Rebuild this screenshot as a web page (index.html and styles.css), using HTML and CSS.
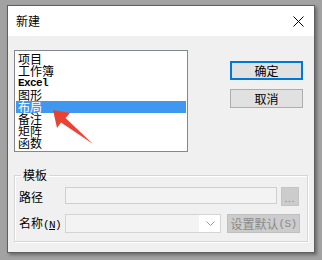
FILE: index.html
```html
<!DOCTYPE html>
<html lang="zh-CN">
<head>
<meta charset="utf-8">
<link rel="stylesheet" href="styles.css">
</head>
<body>
<div class="dialog">
  <div class="titlebar">
    <span class="title">新建</span>
    <svg class="close" width="11" height="11" viewBox="0 0 11 11"><path d="M0.5 0.5 L10.5 10.5 M10.5 0.5 L0.5 10.5" stroke="#000" stroke-width="1"/></svg>
  </div>
  <div class="content">
    <div class="top">
      <div class="listwrap">
        <div class="listbox">
          <div class="item">项目</div>
          <div class="item">工作簿</div>
          <div class="item mono">Excel</div>
          <div class="item">图形</div>
          <div class="item selected">布局</div>
          <div class="item">备注</div>
          <div class="item">矩阵</div>
          <div class="item">函数</div>
        </div>
        <svg class="arrow" width="46" height="40" viewBox="0 0 46 40">
          <defs>
            <linearGradient id="g" x1="0" y1="0" x2="1" y2="1">
              <stop offset="0" stop-color="#e8402f"/>
              <stop offset="1" stop-color="#f0453a"/>
            </linearGradient>
          </defs>
          <polygon points="3,2 20,5 15.5,10 43,36 11,14.5 7,20" fill="url(#g)"/>
        </svg>
      </div>
      <div class="buttons">
        <div class="btn default">确定</div>
        <div class="btn">取消</div>
      </div>
    </div>
    <fieldset class="group">
      <legend>模板</legend>
      <div class="row">
        <span class="label">路径</span>
        <div class="textbox"></div>
        <div class="dots">...</div>
      </div>
      <div class="row row2">
        <span class="label">名称<span class="mono">(<u>N</u>)</span></span>
        <div class="combo">
          <div class="combo-edit"></div>
          <svg class="chev" width="9" height="5" viewBox="0 0 9 5"><path d="M0.5 0.5 L4.5 4.5 L8.5 0.5" fill="none" stroke="#9a9a9a" stroke-width="1"/></svg>
        </div>
        <div class="btn disabled">设置默认<span class="mono">(S)</span></div>
      </div>
    </fieldset>
  </div>
</div>
</body>
</html>
```

FILE: styles.css
```css
* { box-sizing: border-box; }
html, body { margin: 0; }
body {
  background: #a2a2a2;
  padding: 5px 0 0 7px;
  width: 322px;
  height: 260px;
  overflow: hidden;
  font-family: "Noto Sans CJK SC", "Noto Sans", sans-serif;
  font-size: 12px;
  color: #000;
}
.dialog {
  width: 308px;
  height: 248px;
  border: 1px solid #5f5f5f;
  background: #f0f0f0;
  box-shadow: 2px 2px 3px rgba(0,0,0,0.35);
}
.titlebar {
  height: 30px;
  background: #fff;
  display: flex;
  align-items: center;
  justify-content: space-between;
  padding: 0 10px 0 8px;
}
.title { font-size: 12px; line-height: 14px; }
.close { display: block; }
.content { padding: 14px 7px 0 6px; }
.top { display: flex; align-items: flex-start; }
.listwrap { position: relative; }
.listbox {
  width: 174px;
  height: 102px;
  border: 1px solid #828790;
  background: #fff;
  padding: 2px 1px 0 0;
}
.item {
  height: 12px;
  line-height: 12px;
  padding-left: 3px;
  white-space: nowrap;
}
.mono {
  font-family: "Liberation Mono", monospace;
  font-size: 11px;
  letter-spacing: -0.6px;
}
.item.mono { font-weight: bold; }
.item.selected {
  background: #3f97ef;
  color: #fff;
  margin-left: 1px;
  padding-left: 2px;
}
.arrow { position: absolute; left: 36px; top: 58px; }
.buttons {
  margin-left: 42px;
  margin-top: 11px;
  display: flex;
  flex-direction: column;
  gap: 9px;
}
.btn {
  width: 73px;
  height: 19px;
  border: 1px solid #adadad;
  background: #e1e1e1;
  display: flex;
  align-items: center;
  justify-content: center;
  line-height: 12px;
}
.btn.default { border: 2px solid #0078d7; }
.group {
  margin: 16px 0 0 0;
  width: 294px;
  border: 1px solid #d6d6d6;
  box-shadow: inset 1px 1px 0 #fff, 1px 1px 0 #fff;
  padding: 5px 0 8px 4px;
  min-width: 0;
}
.group legend {
  padding: 0 2px;
  margin-left: 2px;
  line-height: 14px;
  font-size: 12px;
}
.row { display: flex; align-items: center; height: 19px; }
.row2 { margin-top: 8px; }
.label { width: 46px; line-height: 12px; white-space: nowrap; }
.textbox {
  align-self: flex-start;
  width: 212px;
  height: 17px;
  border: 1px solid #cfcfcf;
  background: #f3f3f3;
}
.dots {
  margin-left: 4px;
  width: 18px;
  height: 19px;
  background: #cccccc;
  border: 1px solid #c4c4c4;
  color: #8a8a8a;
  font-size: 9px;
  line-height: 9px;
  display: flex;
  align-items: flex-end;
  justify-content: center;
  padding-bottom: 2px;
  letter-spacing: 1px;
}
.combo {
  width: 156px;
  height: 19px;
  border: 1px solid #d4d4d4;
  background: #fff;
  display: flex;
  align-items: center;
}
.combo-edit {
  width: 133px;
  height: 17px;
  background: #f3f3f3;
}
.chev { margin-left: 7px; }
.btn.disabled {
  margin-left: 6px;
  background: #cccccc;
  border: 1px solid #bfbfbf;
  color: #8a8a8a;
  white-space: nowrap;
}
```
